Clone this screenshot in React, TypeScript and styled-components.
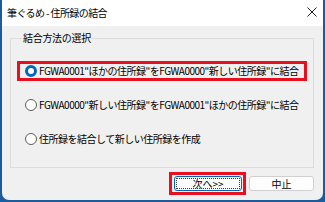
import * as React from 'react';
import styled, { createGlobalStyle } from 'styled-components';

const GlobalStyle = createGlobalStyle`
  html, body {
    margin: 0;
    padding: 0;
    background: #1d5c9b;
  }
  body {
    font-family: "Noto Sans CJK JP", "Noto Sans", sans-serif;
    font-size: 10px;
    color: #000;
  }
`;

const Frame = styled.div`
  width: 321px;
  height: 200px;
  margin: 0 2px;
  background: #f0f0f0;
  border-radius: 0 0 7px 7px;
  display: flex;
  flex-direction: column;
  overflow: hidden;
`;

const TitleBar = styled.div`
  height: 26px;
  background: #ffffff;
  display: flex;
  align-items: center;
  justify-content: space-between;
  padding: 0 6px 0 5px;
  flex-shrink: 0;
`;

const Title = styled.span`
  font-size: 10px;
  line-height: 14px;
  letter-spacing: -0.6px;
  margin-top: -1px;
`;

const CloseIcon = styled.svg`
  width: 10px;
  height: 10px;
  margin-top: -2px;
`;

const Body = styled.div`
  flex: 1;
  padding: 5px 9px 0 8px;
  display: flex;
  flex-direction: column;
`;

const Group = styled.fieldset`
  margin: 0;
  padding: 16px 6px 18px 6px;
  border: 1px solid #dcdcdc;
  display: flex;
  flex-direction: column;
  gap: 14px;
`;

const Legend = styled.legend`
  padding: 0 1px;
  margin-left: 5px;
  font-size: 10px;
  line-height: 14px;
  letter-spacing: -0.3px;
`;

const Option = styled.div<{ $highlight?: boolean }>`
  height: 20px;
  box-sizing: border-box;
  border: 3px solid ${(p) => (p.$highlight ? '#e8101e' : 'transparent')};
  display: flex;
  align-items: center;
  gap: 2px;
  padding-left: 5px;
  white-space: nowrap;
`;

const Radio = styled.span<{ $checked?: boolean }>`
  width: 12px;
  height: 12px;
  box-sizing: border-box;
  border-radius: 50%;
  flex-shrink: 0;
  border: ${(p) => (p.$checked ? '3.5px solid #0067c0' : '1px solid #5d5d5d')};
  background: #ffffff;
`;

const Label = styled.span`
  font-size: 10px;
  line-height: 14px;
  letter-spacing: -0.5px;
`;

const Buttons = styled.div`
  display: flex;
  justify-content: flex-end;
  align-items: center;
  margin-top: 4px;
  gap: 3px;
`;

const Marker = styled.div`
  border: 3px solid #e8101e;
  padding: 1px 1px 1px 2px;
  display: flex;
`;

const Button = styled.button<{ $focused?: boolean; $w: number }>`
  width: ${(p) => p.$w}px;
  height: 15px;
  box-sizing: border-box;
  padding: 0;
  margin: 0;
  font-family: inherit;
  font-size: 10px;
  line-height: 12px;
  color: #000;
  background: #fdfdfd;
  border-radius: 3px;
  border: ${(p) => (p.$focused ? '1.5px solid #0067c0' : '1px solid #d0d0d0')};
  display: flex;
  align-items: center;
  justify-content: center;
  position: relative;
  &::after {
    content: '';
    display: ${(p) => (p.$focused ? 'block' : 'none')};
    position: absolute;
    inset: 1px;
    border: 1px dotted #3a3a3a;
  }
`;

export default function App() {
  return (
    <>
      <GlobalStyle />
      <Frame>
        <TitleBar>
          <Title>筆ぐるめ - 住所録の結合</Title>
          <CloseIcon viewBox="0 0 10 10">
            <path d="M0.5 0.5 L9.5 9.5 M9.5 0.5 L0.5 9.5" stroke="#1a1a1a" strokeWidth="1" fill="none" />
          </CloseIcon>
        </TitleBar>
        <Body>
          <Group>
            <Legend>結合方法の選択</Legend>
            <Option $highlight>
              <Radio $checked />
              <Label>FGWA0001"ほかの住所録"をFGWA0000"新しい住所録"に結合</Label>
            </Option>
            <Option>
              <Radio />
              <Label>FGWA0000"新しい住所録"をFGWA0001"ほかの住所録"に結合</Label>
            </Option>
            <Option>
              <Radio />
              <Label>住所録を結合して新しい住所録を作成</Label>
            </Option>
          </Group>
          <Buttons>
            <Marker>
              <Button $focused $w={68}>次へ&gt;&gt;</Button>
            </Marker>
            <Button $w={65}>中止</Button>
          </Buttons>
        </Body>
      </Frame>
    </>
  );
}
